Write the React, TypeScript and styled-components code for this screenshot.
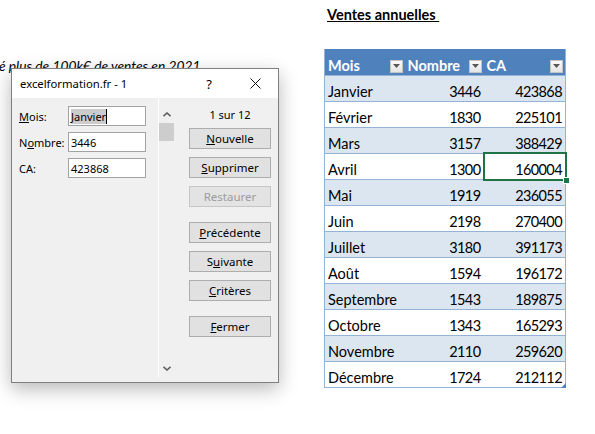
import React from 'react';
import styled, { createGlobalStyle } from 'styled-components';

interface MonthRow {
    mois: string;
    nombre: number;
    ca: number;
}

const rows: MonthRow[] = [
    { mois: 'Janvier', nombre: 3446, ca: 423868 },
    { mois: 'Février', nombre: 1830, ca: 225101 },
    { mois: 'Mars', nombre: 3157, ca: 388429 },
    { mois: 'Avril', nombre: 1300, ca: 160004 },
    { mois: 'Mai', nombre: 1919, ca: 236055 },
    { mois: 'Juin', nombre: 2198, ca: 270400 },
    { mois: 'Juillet', nombre: 3180, ca: 391173 },
    { mois: 'Août', nombre: 1594, ca: 196172 },
    { mois: 'Septembre', nombre: 1543, ca: 189875 },
    { mois: 'Octobre', nombre: 1343, ca: 165293 },
    { mois: 'Novembre', nombre: 2110, ca: 259620 },
    { mois: 'Décembre', nombre: 1724, ca: 212112 },
];

const GlobalStyle = createGlobalStyle`
    html, body {
        margin: 0;
        padding: 0;
        background: #ffffff;
    }
    #root {
        width: 595px;
        height: 434px;
        overflow: hidden;
    }
`

const Page = styled.div`
    display: flex;
    width: 595px;
    height: 434px;
    background: #ffffff;
    font-family: Lato, "Liberation Sans", sans-serif;
    color: #000000;
`

const LeftPane = styled.div`
    position: relative;
    width: 324px;
    overflow: hidden;
`

const Caption = styled.div`
    margin: 57px 0 0 -1px;
    font-style: italic;
    font-size: 13.8px;
    line-height: 18px;
    white-space: nowrap;
`

const RightPane = styled.div`
    display: flex;
    flex-direction: column;
    padding-top: 6px;
`

const Heading = styled.div`
    margin-left: 3px;
    font-weight: bold;
    font-size: 14.5px;
    line-height: 18px;
    text-decoration: underline;
    white-space: pre;
`

const Table = styled.table`
    margin-top: 25px;
    border-collapse: collapse;
    table-layout: fixed;
    width: 241px;
    border-left: 1px solid #95b3d7;
    border-right: 1px solid #95b3d7;
    border-bottom: 1px solid #95b3d7;
    font-size: 14.5px;
`

const HeadCell = styled.th<{ $w: number }>`
    width: ${(p) => p.$w}px;
    height: 26px;
    padding: 0 2px 0 3px;
    box-sizing: border-box;
    background: #4f81bd;
    color: #ffffff;
    font-weight: bold;
    text-align: left;
    vertical-align: bottom;
`

const HeadInner = styled.div`
    display: flex;
    align-items: flex-end;
    justify-content: space-between;
    line-height: 18px;
`

const FilterButton = styled.span`
    display: flex;
    align-items: center;
    justify-content: center;
    width: 13px;
    height: 13px;
    margin-bottom: 2px;
    box-sizing: border-box;
    border: 1px solid #c4c4c4;
    background: linear-gradient(#fafafa, #e4e4e4);
`

const Row = styled.tr<{ $band: boolean }>`
    height: 26px;
    background: ${(p) => (p.$band ? '#dce6f1' : '#ffffff')};
    border-top: 1px solid #95b3d7;
`

const Cell = styled.td<{ $num?: boolean; $selected?: boolean; $corner?: boolean }>`
    position: relative;
    padding: 0 3px 0 3px;
    text-align: ${(p) => (p.$num ? 'right' : 'left')};
    vertical-align: bottom;
    line-height: 18px;
    letter-spacing: ${(p) => (p.$num ? '-0.6px' : '0')};
    white-space: nowrap;
    ${(p) => p.$selected && `
        &::after {
            content: '';
            position: absolute;
            left: -1px;
            top: -2px;
            right: -2px;
            bottom: -2px;
            border: 2px solid #217346;
        }
        &::before {
            content: '';
            position: absolute;
            right: -5px;
            bottom: -5px;
            width: 5px;
            height: 5px;
            background: #217346;
            border: 1px solid #ffffff;
            z-index: 2;
        }
    `}
    ${(p) => p.$corner && `
        &::after {
            content: '';
            position: absolute;
            right: -1px;
            bottom: -1px;
            border-style: solid;
            border-width: 0 0 5px 5px;
            border-color: transparent transparent #4f81bd transparent;
        }
    `}
`

const Dialog = styled.div`
    position: absolute;
    left: 11px;
    top: 68px;
    width: 268px;
    height: 315px;
    box-sizing: border-box;
    display: flex;
    flex-direction: column;
    border: 1px solid #7f7f7f;
    background: #f0f0f0;
    box-shadow: 0 6px 18px rgba(0, 0, 0, 0.28);
    font-family: "Noto Sans", "Open Sans", sans-serif;
    font-size: 11px;
`

const TitleBar = styled.div`
    display: flex;
    align-items: center;
    height: 29px;
    background: #ffffff;
`

const Title = styled.div`
    flex: 1;
    padding-left: 8px;
    font-size: 11.3px;
`

const TitleButton = styled.div`
    display: flex;
    align-items: center;
    justify-content: center;
    width: 46px;
    height: 29px;
    font-size: 13px;
`

const Body = styled.div`
    flex: 1;
    display: flex;
`

const Fields = styled.div`
    width: 146px;
    padding: 8px 0 0 7px;
    box-sizing: border-box;
    display: flex;
    flex-direction: column;
    gap: 6px;
`

const FieldRow = styled.div`
    display: flex;
    align-items: center;
    height: 20px;
`

const Label = styled.span`
    width: 49px;
`

const TextBox = styled.div`
    display: flex;
    align-items: center;
    width: 78px;
    height: 20px;
    box-sizing: border-box;
    padding-left: 2px;
    border: 1px solid #a2a2a2;
    background: #ffffff;
`

const Selection = styled.span`
    background: #cccccc;
    border-right: 1px solid #000000;
    line-height: 15px;
`

const Key = styled.span`
    text-decoration: underline;
`

const Scrollbar = styled.div`
    width: 16px;
    margin: 1px 0 5px;
    border-left: 1px solid #ffffff;
    display: flex;
    flex-direction: column;
`

const ArrowBox = styled.div<{ $top?: boolean }>`
    display: flex;
    align-items: center;
    justify-content: center;
    width: 15px;
    height: 17px;
    margin-top: ${(p) => (p.$top ? '7px' : '0')};
`

const Thumb = styled.div`
    width: 15px;
    height: 18px;
    background: #cdcdcd;
`

const Spacer = styled.div`
    flex: 1;
`

const Actions = styled.div`
    flex: 1;
    display: flex;
    flex-direction: column;
    padding: 8px 0 0 14px;
`

const Counter = styled.div`
    width: 82px;
    height: 18px;
    margin-bottom: 4px;
    line-height: 18px;
    text-align: center;
`

const ActionButton = styled.div<{ $disabled?: boolean; $spaced?: boolean }>`
    display: flex;
    align-items: center;
    justify-content: center;
    width: 82px;
    height: 21px;
    box-sizing: border-box;
    margin-bottom: 8px;
    margin-top: ${(p) => (p.$spaced ? '7px' : '0')};
    border: 1px solid ${(p) => (p.$disabled ? '#c6c6c6' : '#adadad')};
    background: ${(p) => (p.$disabled ? '#e3e3e3' : '#e1e1e1')};
    color: ${(p) => (p.$disabled ? '#9d9d9d' : '#000000')};
    font-size: 11.5px;
`

const Chevron: React.FC<{ down?: boolean }> = ({ down }) => (
    <svg width="8" height="5" viewBox="0 0 8 5">
        <path
            d={down ? 'M0.5 0.8 L4 4 L7.5 0.8' : 'M0.5 4.2 L4 1 L7.5 4.2'}
            fill="none"
            stroke="#606060"
            strokeWidth="1.6"
        />
    </svg>
)

const FilterArrow = () => (
    <svg width="7" height="4" viewBox="0 0 7 4">
        <path d="M0 0 L7 0 L3.5 4 Z" fill="#595959" />
    </svg>
)

const App: React.FC = () => {
    return <>
        <GlobalStyle />
        <Page>
            <LeftPane>
                <Caption>é plus de 100k€ de ventes en 2021</Caption>
                <Dialog>
                    <TitleBar>
                        <Title>excelformation.fr - 1</Title>
                        <TitleButton>?</TitleButton>
                        <TitleButton>
                            <svg width="11" height="11" viewBox="0 0 11 11">
                                <path d="M0.5 0.5 L10.5 10.5 M10.5 0.5 L0.5 10.5" stroke="#111111" strokeWidth="1" />
                            </svg>
                        </TitleButton>
                    </TitleBar>
                    <Body>
                        <Fields>
                            <FieldRow>
                                <Label><Key>M</Key>ois:</Label>
                                <TextBox><Selection>Janvier</Selection></TextBox>
                            </FieldRow>
                            <FieldRow>
                                <Label>N<Key>o</Key>mbre:</Label>
                                <TextBox>3446</TextBox>
                            </FieldRow>
                            <FieldRow>
                                <Label>CA:</Label>
                                <TextBox>423868</TextBox>
                            </FieldRow>
                        </Fields>
                        <Scrollbar>
                            <ArrowBox $top><Chevron /></ArrowBox>
                            <Thumb />
                            <Spacer />
                            <ArrowBox><Chevron down /></ArrowBox>
                        </Scrollbar>
                        <Actions>
                            <Counter>1 sur 12</Counter>
                            <ActionButton><Key>N</Key>ouvelle</ActionButton>
                            <ActionButton><Key>S</Key>upprimer</ActionButton>
                            <ActionButton $disabled>Restaurer</ActionButton>
                            <ActionButton $spaced><Key>P</Key>récédente</ActionButton>
                            <ActionButton>S<Key>u</Key>ivante</ActionButton>
                            <ActionButton><Key>C</Key>ritères</ActionButton>
                            <ActionButton $spaced><Key>F</Key>ermer</ActionButton>
                        </Actions>
                    </Body>
                </Dialog>
            </LeftPane>
            <RightPane>
                <Heading>Ventes annuelles </Heading>
                <Table>
                    <thead>
                        <tr>
                            <HeadCell $w={80}><HeadInner>Mois<FilterButton><FilterArrow /></FilterButton></HeadInner></HeadCell>
                            <HeadCell $w={79}><HeadInner>Nombre<FilterButton><FilterArrow /></FilterButton></HeadInner></HeadCell>
                            <HeadCell $w={82}><HeadInner>CA<FilterButton><FilterArrow /></FilterButton></HeadInner></HeadCell>
                        </tr>
                    </thead>
                    <tbody>
                        {rows.map((r, i) => (
                            <Row key={r.mois} $band={i % 2 === 0}>
                                <Cell>{r.mois}</Cell>
                                <Cell $num>{r.nombre}</Cell>
                                <Cell $num $selected={r.mois === 'Avril'} $corner={i === rows.length - 1}>{r.ca}</Cell>
                            </Row>
                        ))}
                    </tbody>
                </Table>
            </RightPane>
        </Page>
    </>
}

export default App;
